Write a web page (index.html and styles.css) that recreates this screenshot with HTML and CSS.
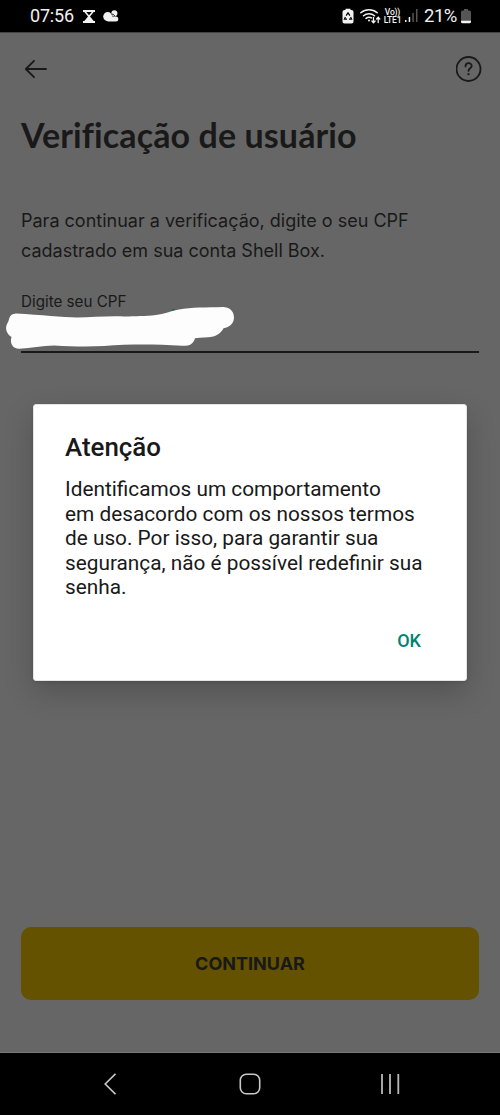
FILE: index.html
```html
<!DOCTYPE html>
<html lang="pt-BR">
<head>
<meta charset="utf-8">
<title>Verificação de usuário</title>
<link rel="stylesheet" href="styles.css">
</head>
<body>
<div class="phone">
  <header class="status">
    <div class="status-left">
      <span class="clock">07:56</span>
      <svg class="hourglass" width="12" height="13" viewBox="0 0 12 13"><path d="M0 0h12v2h-1.300L7 6.500l3.700 4.500H12v2H0v-2h1.300L5 6.500 1.300 2H0z" fill="#f2f2f2"/><path d="M3.300 2h5.400L6 5.200z" fill="#000"/></svg>
      <svg class="cloud" width="16" height="12" viewBox="0 0 16 12"><circle cx="11.400" cy="3.200" r="3" fill="#f2f2f2"/><path d="M8 4.200c2.300-.2 3.600.8 4 2.600" fill="none" stroke="#000" stroke-width="1"/><circle cx="4.700" cy="6.600" r="4.500" fill="#f2f2f2"/><rect x="3" y="6.400" width="12.300" height="5" rx="2.500" fill="#f2f2f2"/></svg>
    </div>
    <div class="status-right">
      <svg class="saver" width="12" height="16" viewBox="0 0 12 16"><path d="M3.500 2V.8h5V2H9.500a2 2 0 0 1 2 2v9.500a2 2 0 0 1-2 2h-7a2 2 0 0 1-2-2V4a2 2 0 0 1 2-2z" fill="#f2f2f2"/><path d="M4.100 7.700 6 4.900l1.900 2.800M8.600 8.900l1 2.300H7M5 11.200H2.400l1-2.300" fill="none" stroke="#000" stroke-width="1.200"/></svg>
      <svg class="wifi" width="21" height="16" viewBox="0 0 21 16" fill="none" stroke="#f2f2f2" stroke-width="1.500" stroke-linecap="round"><path d="M.8 4.700a12.500 12.500 0 0 1 16.400 0M3.500 7.700a8.500 8.500 0 0 1 11 0M6.100 10.400a4.700 4.700 0 0 1 5.400-.5"/><circle cx="9" cy="12.400" r="1" fill="#f2f2f2" stroke="none"/><path d="M13.500 9.500v5M11.900 13l1.600 1.800 1.600-1.800M18.200 14.500v-5M16.600 11l1.600-1.800 1.600 1.800" stroke-width="1.300"/></svg>
      <span class="volte"><span>Vo))</span><span>LTE1</span></span>
      <svg class="signal" width="13" height="14" viewBox="0 0 13 14"><path d="M0 11h1.500v2H0zM3.700 8h1.500v5H3.700z" fill="#f2f2f2"/><path d="M7.300 4h1.500v9H7.300zM11 0h1.500v13H11z" fill="#555"/></svg>
      <span class="percent">21%</span>
      <svg class="battery" width="10" height="15" viewBox="0 0 10 15"><path d="M3 1.500V0h4v1.500h1.200A1.800 1.800 0 0 1 10 3.300V12H0V3.300a1.800 1.800 0 0 1 1.800-1.800z" fill="#555"/><path d="M0 11.700h10v1.100a1.500 1.500 0 0 1-1.500 1.500h-7A1.500 1.500 0 0 1 0 12.800z" fill="#f2f2f2"/></svg>
    </div>
  </header>
  <main class="screen">
    <div class="toolbar">
      <svg width="24" height="20" viewBox="0 0 24 20" fill="none" stroke="#191919" stroke-width="1.800" stroke-linecap="round"><path d="M22 10H2M10 1.800 1.800 10l8.200 8.200" stroke-linejoin="round"/></svg>
      <svg width="26" height="26" viewBox="0 0 26 26" fill="none" stroke="#191919" stroke-width="1.800" stroke-linecap="round"><circle cx="12.500" cy="13" r="12"/><path d="M9.500 10.400c0-4.200 6.200-4.200 6.200-.4 0 2.500-3.200 2.200-3.200 4.900"/><circle cx="12.500" cy="18.200" r="1.100" fill="#191919" stroke="none"/></svg>
    </div>
    <h1 class="title">Verificação de usuário</h1>
    <p class="intro">Para continuar a verificação, digite o seu CPF<br>cadastrado em sua conta Shell Box.</p>
    <div class="field">
      <label class="field-label">Digite seu CPF</label>
      <svg class="scribble" width="240" height="50" viewBox="0 300 240 50"><circle cx="173.500" cy="310.700" r="1.800" fill="#086653"/><path d="M16 313.500C8 314 10 320 7.500 323c-3 5-1 11 4 14-2 6 1 12 8 11.800C31 348 42 346 54 345.500c18 1 34 1.300 50 .5 20-1.600 40-1.700 58-1.200 9 .3 18 1.500 26 .7 4-1 6-4 7-7.300 6-.6 12-.7 17-1.500 6-1.300 9.500-4.600 11.500-8.500 6-.6 10.500-5 10.500-10.700 0-6.500-5-10.500-11-10.500-16 .6-32 0-44 2.600-8 1.500-15 4.600-23 5.400-11 1.200-20 1.200-32 1.500-16-.6-32 .7-47 1-15-.5-35-2.500-61-4z" fill="#fdfdfd"/></svg>
    </div>
    <button class="continue">CONTINUAR</button>
  </main>
  <nav class="nav">
    <svg width="12" height="22" viewBox="0 0 12 22" fill="none" stroke="#c8c8c8" stroke-width="1.600"><path d="M11.500.8 1.200 11l10.300 10.200"/></svg>
    <svg width="22" height="22" viewBox="0 0 22 22" fill="none" stroke="#c8c8c8" stroke-width="1.600"><rect x="1.300" y="1.300" width="19.400" height="19.400" rx="6"/></svg>
    <svg width="20" height="20" viewBox="0 0 20 20" fill="none" stroke="#b8b8b8" stroke-width="1.800"><path d="M2 0v20M10 0v20M18.300 0v20"/></svg>
  </nav>
  <section class="dialog" role="dialog">
    <h2 class="dialog-title">Atenção</h2>
    <p class="dialog-text">Identificamos um comportamento<br>em desacordo com os nossos termos<br>de uso. Por isso, para garantir sua<br>segurança, não é possível redefinir sua<br>senha.</p>
    <button class="ok">OK</button>
  </section>
</div>
</body>
</html>
```
FILE: styles.css
```css
* { box-sizing: border-box; }
body { margin: 0; font-family: Roboto, sans-serif; background: #000; }
svg { display: block; flex: none; }
button { border: 0; padding: 0; }
.phone { position: relative; width: 500px; height: 1115px; display: flex; flex-direction: column; overflow: hidden; }
.status { height: 32px; background: #000; color: #f2f2f2; display: flex; justify-content: space-between; align-items: center; padding: 0 30px; flex: none; }
.status-left, .status-right { display: flex; align-items: center; }
.clock { font-size: 18px; line-height: 32px; width: 53px; letter-spacing: -0.2px; }
.cloud { margin-left: 8px; }
.status-right { margin-right: -1px; }
.wifi { margin-left: 6px; }
.volte { display: flex; flex-direction: column; align-items: center; width: 19px; margin-left: 2px; font: 500 8.500px/8px Roboto, sans-serif; letter-spacing: -0.2px; }
.signal { margin-left: 3px; }
.percent { font-size: 18.500px; line-height: 32px; margin-left: 6px; width: 34px; letter-spacing: -0.5px; white-space: nowrap; }
.battery { margin-left: 3px; }
.screen { height: 1021px; flex: none; background: #666; border-top: 1px solid #444; border-bottom: 1px solid #777; display: flex; flex-direction: column; color: #191919; }
.toolbar { height: 26px; margin: 23px 18px 0 24px; display: flex; justify-content: space-between; align-items: center; flex: none; }
.title { margin: 31px 0 0 21px; font: 700 34px/44px Lato, sans-serif; letter-spacing: 0.1px; white-space: nowrap; }
.intro { margin: 49px 0 0 21px; font: 400 18px/29.500px Inter, sans-serif; white-space: nowrap; }
.field { position: relative; margin: 25px 21px 0; padding-top: 2px; height: 63px; border-bottom: 2px solid #191919; flex: none; }
.field-label { display: block; font: 400 15.200px/20px Inter, sans-serif; }
.scribble { position: absolute; left: -21px; top: 10px; }
.continue { margin: auto 21px 52px; height: 73px; flex: none; border-radius: 10px; background: #645200; color: #191919; font: 700 18px/73px Inter, sans-serif; }
.nav { flex: 1; background: #000; display: flex; justify-content: space-between; align-items: center; padding: 0 100px 0 104px; }
.nav svg:nth-child(2) { margin-left: 3px; }
.dialog { position: absolute; left: 33px; top: 404px; width: 434px; height: 277px; background: #fff; border-radius: 3px; border: 1px solid #e4e4e4; box-shadow: 0 11px 30px rgba(0,0,0,.2), 0 1px 3px rgba(0,0,0,.12); padding: 27px 31px 0; color: #191919; display: flex; flex-direction: column; }
.dialog-title { margin: 0; font: 500 25.900px/30px Roboto, sans-serif; }
.dialog-text { margin: 15px 0 0; font: 400 20.800px/24.500px Roboto, sans-serif; white-space: nowrap; }
.ok { align-self: flex-end; margin: 29px 14px 0 0; background: transparent; color: #008272; font: 500 18px/24px Roboto, sans-serif; }
```
